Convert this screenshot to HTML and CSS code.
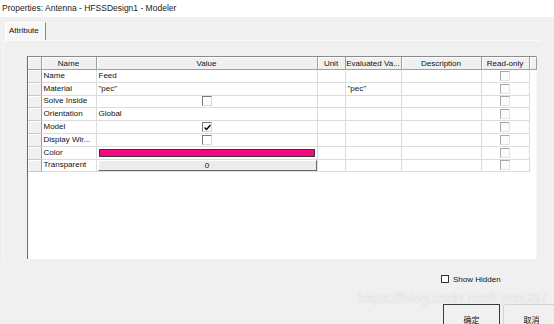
FILE: index.html
```html
<!DOCTYPE html>
<html lang="en">
<head>
    <meta charset="UTF-8">
    <title>Properties: Antenna - HFSSDesign1 - Modeler</title>
    <link rel="stylesheet" href="styles.css">
</head>
<body>

<div class="titlebar">Properties: Antenna - HFSSDesign1 - Modeler</div>

<div class="tabstrip">
    <div class="tab">Attribute</div>
</div>

<div class="page">
    <div class="grid">
        <table class="props">
            <colgroup>
                <col style="width: 13px;">
                <col style="width: 55px;">
                <col style="width: 221px;">
                <col style="width: 28px;">
                <col style="width: 56px;">
                <col style="width: 80px;">
                <col style="width: 48px;">
                <col style="width: 7px;">
            </colgroup>
            <thead>
                <tr>
                    <th class="corner"></th>
                    <th>Name</th>
                    <th>Value</th>
                    <th>Unit</th>
                    <th>Evaluated Va...</th>
                    <th>Description</th>
                    <th>Read-only</th>
                    <th class="filler"></th>
                </tr>
            </thead>
            <tbody>
                <tr>
                    <td class="rowhead"></td>
                    <td>Name</td>
                    <td>Feed</td>
                    <td></td><td></td><td></td>
                    <td class="center"><span class="check disabled"></span></td>
                    <td class="blank"></td>
                </tr>
                <tr>
                    <td class="rowhead"></td>
                    <td>Material</td>
                    <td>"pec"</td>
                    <td></td>
                    <td>"pec"</td>
                    <td></td>
                    <td class="center"><span class="check disabled"></span></td>
                    <td class="blank"></td>
                </tr>
                <tr>
                    <td class="rowhead"></td>
                    <td>Solve Inside</td>
                    <td class="center"><span class="check"></span></td>
                    <td></td><td></td><td></td>
                    <td class="center"><span class="check disabled"></span></td>
                    <td class="blank"></td>
                </tr>
                <tr>
                    <td class="rowhead"></td>
                    <td>Orientation</td>
                    <td>Global</td>
                    <td></td><td></td><td></td>
                    <td class="center"><span class="check disabled"></span></td>
                    <td class="blank"></td>
                </tr>
                <tr>
                    <td class="rowhead"></td>
                    <td>Model</td>
                    <td class="center">
                        <span class="check">
                            <svg width="7" height="7" viewBox="0 0 7 7"><path d="M0.5 3.5 L2.5 5.5 L6.5 1" fill="none" stroke="#000" stroke-width="1.4"/></svg>
                        </span>
                    </td>
                    <td></td><td></td><td></td>
                    <td class="center"><span class="check disabled"></span></td>
                    <td class="blank"></td>
                </tr>
                <tr>
                    <td class="rowhead"></td>
                    <td>Display Wir...</td>
                    <td class="center"><span class="check"></span></td>
                    <td></td><td></td><td></td>
                    <td class="center"><span class="check disabled"></span></td>
                    <td class="blank"></td>
                </tr>
                <tr>
                    <td class="rowhead"></td>
                    <td>Color</td>
                    <td><div class="swatch"></div></td>
                    <td></td><td></td><td></td>
                    <td class="center"><span class="check disabled"></span></td>
                    <td class="blank"></td>
                </tr>
                <tr>
                    <td class="rowhead"></td>
                    <td>Transparent</td>
                    <td><div class="slider">0</div></td>
                    <td></td><td></td><td></td>
                    <td class="center"><span class="check disabled"></span></td>
                    <td class="blank"></td>
                </tr>
            </tbody>
        </table>
    </div>
</div>

<div class="options">
    <span class="check plain"></span>
    <span>Show Hidden</span>
</div>

<div class="buttons">
    <div class="btn default">确定</div>
    <div class="btn">取消</div>
</div>

<div class="watermark">https://blog.csdn.net/EyreG97</div>

</body>
</html>
```

FILE: styles.css
```css
/* Dialog look, roughly the Windows classic property sheet */
body {
    margin: 0;
    background-color: #f0f0f0;
    font-family: "Liberation Sans", Arial, "Noto Sans CJK SC", sans-serif;
    font-size: 8px;
    color: #111;
    overflow: hidden;
}
.titlebar {
    height: 17px;
    line-height: 16px;
    padding-left: 2px;
    background-color: #fff;
    font-size: 8.5px;
    color: #222;
}
.tabstrip {
    height: 18px;
    padding: 5px 0 0 5px;
}
.tab {
    display: inline-block;
    box-sizing: border-box;
    width: 41px;
    height: 18px;
    line-height: 15px;
    padding-left: 3px;
    background-color: #f7f7f7;
    border-top: 1px solid #fff;
    border-left: 1px solid #fff;
    border-right: 1px solid #8a8a8a;
}
.page {
    height: 222px;
    margin: 0 14px 0 3px;
    padding: 15px 0 0 23px;
    border-left: 1px solid #fafafa;
    border-top: 1px solid #fafafa;
    box-sizing: border-box;
}
.grid {
    width: 510px;
    height: 203px;
    background-color: #fff;
    border-left: 1px solid #6a6a6a;
    border-top: 1px solid #8a8a8a;
    border-right: 1px solid #f8f8f8;
    box-sizing: border-box;
}
.props {
    table-layout: fixed;
    width: 508px;
    border-collapse: collapse;
}
.props th {
    height: 12px;
    padding: 0;
    font-weight: normal;
    text-align: center;
    background-color: #f0f0f0;
    border-right: 1px solid #a0a0a0;
    border-bottom: 1px solid #a0a0a0;
    box-shadow: inset 1px 1px #fff;
    white-space: nowrap;
    overflow: hidden;
}
.props td {
    height: 11.8px;
    padding: 0 0 0 2px;
    border-right: 1px solid #dcdcdc;
    border-bottom: 1px solid #dcdcdc;
    white-space: nowrap;
    overflow: hidden;
    line-height: 10px;
}
.props td.rowhead {
    padding: 0;
    background-color: #f0f0f0;
    border-right: 1px solid #a0a0a0;
    border-bottom: 1px solid #c8c8c8;
    box-shadow: inset 1px 1px #fff;
}
.props td.blank {
    border: none;
}
.props td.center {
    text-align: center;
    padding: 0;
}
.check {
    display: inline-block;
    box-sizing: border-box;
    width: 10px;
    height: 10px;
    vertical-align: middle;
    background-color: #fff;
    border-top: 1px solid #7a7a7a;
    border-left: 1px solid #7a7a7a;
    border-right: 1px solid #d8d8d8;
    border-bottom: 1px solid #d8d8d8;
    line-height: 0;
}
.check svg {
    margin: 1px 0 0 1px;
}
.check.disabled {
    background-color: #fbfbfb;
    border-top-color: #a8a8a8;
    border-left-color: #a8a8a8;
    border-right-color: #e4e4e4;
    border-bottom-color: #e4e4e4;
}
.check.plain {
    width: 8px;
    height: 8px;
    border: 1px solid #333;
}
.swatch {
    height: 8px;
    margin-right: 2px;
    box-sizing: border-box;
    background-color: #f8087e;
    border: 1px solid #3a3a3a;
}
.slider {
    height: 11px;
    margin: 0 0 0 -1px;
    box-sizing: border-box;
    line-height: 10px;
    text-align: center;
    background-color: #ececec;
    border-top: 1px solid #fff;
    border-left: 1px solid #fff;
    border-right: 1px solid #6a6a6a;
    border-bottom: 1px solid #6a6a6a;
}
.options {
    display: flex;
    align-items: center;
    gap: 4px;
    margin: 12px 0 0 441px;
    height: 10px;
}
.buttons {
    display: flex;
    gap: 3px;
    margin: 20px 0 0 443px;
}
.btn {
    flex-shrink: 0;
    box-sizing: border-box;
    width: 57px;
    height: 23px;
    padding-top: 9px;
    text-align: center;
    background-color: #f0f0f0;
    border: 1px solid #d4d4d4;
}
.btn.default {
    border: 1px solid #3c3c3c;
}
.watermark {
    position: absolute;
    left: 358px;
    top: 290px;
    font-size: 14px;
    color: rgba(255, 255, 255, 0.8);
    text-shadow: 0 0 1px #b8b8b8;
    letter-spacing: 0.2px;
}
```
